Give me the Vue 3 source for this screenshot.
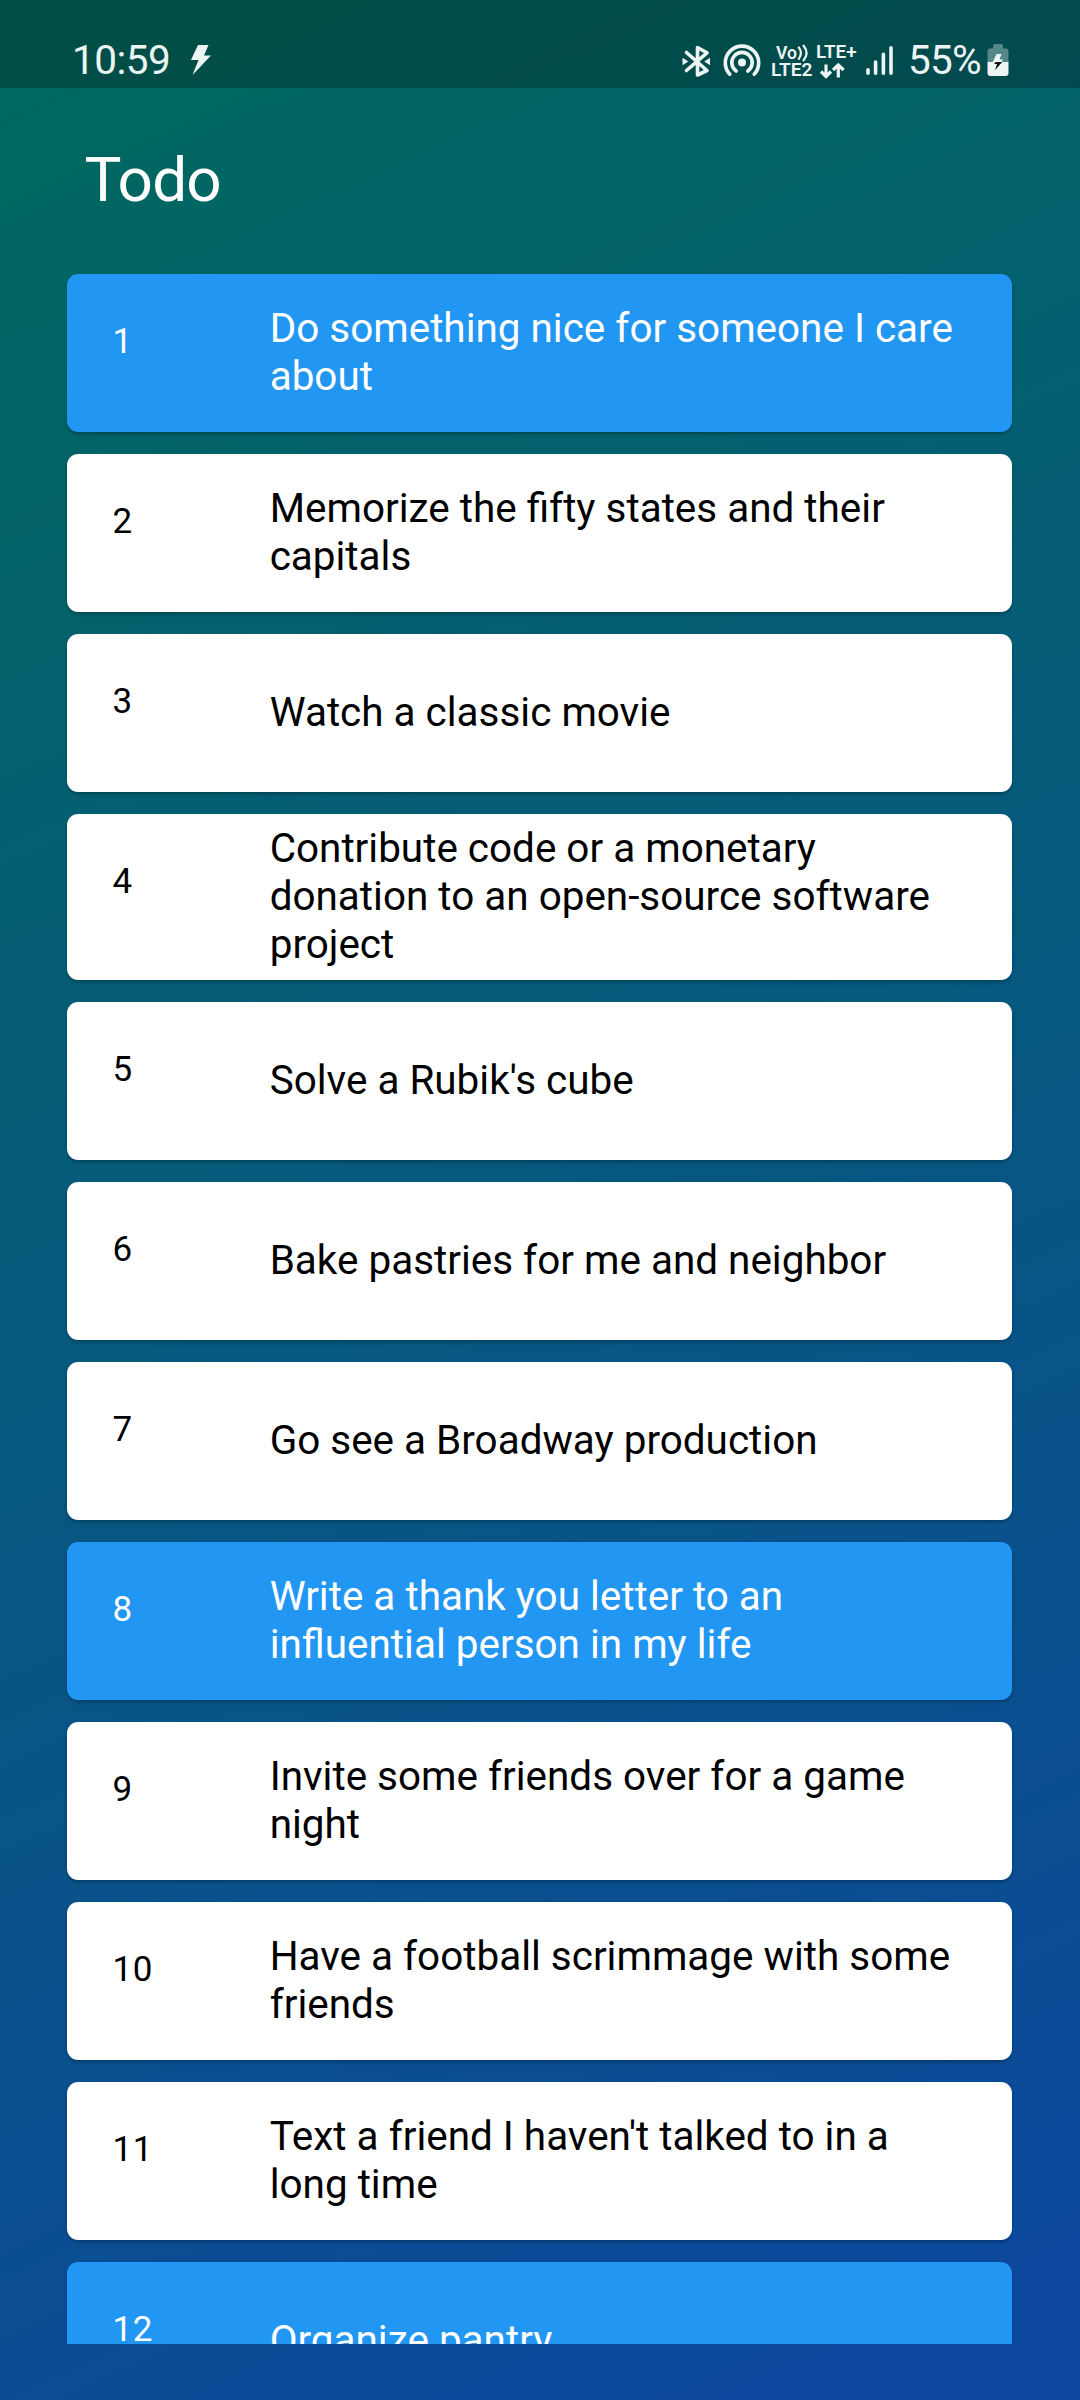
<script setup>
const todos = [
  { text: 'Do something nice for someone I care about', done: true },
  { text: 'Memorize the fifty states and their capitals' },
  { text: 'Watch a classic movie' },
  { text: 'Contribute code or a monetary donation to an open-source software project' },
  { text: "Solve a Rubik's cube" },
  { text: 'Bake pastries for me and neighbor' },
  { text: 'Go see a Broadway production' },
  { text: 'Write a thank you letter to an influential person in my life', done: true },
  { text: 'Invite some friends over for a game night' },
  { text: 'Have a football scrimmage with some friends' },
  { text: "Text a friend I haven't talked to in a long time" },
  { text: 'Organize pantry', done: true },
]
</script>

<template>
  <div class="screen">
    <header class="status">
      <span class="clock">10:59</span>
      <svg class="flash" width="20" height="30" viewBox="0 0 20 30">
        <path d="M7 0H17.500L13 10.500H20L1.500 30L7.500 15H0Z" />
      </svg>
      <span class="spacer"></span>
      <svg class="icons" width="240" height="40" viewBox="680 40 240 40">
        <g class="line">
          <path d="M686.500 52.500L707 70.500L697.500 75V47.500L707 52.800L686.500 70.500" stroke-width="3.600" />
        </g>
        <path d="M682.500 57.800L688.300 61.400L682.500 65.200Z M710 57.800L704.200 61.400L710 65.200Z" />
        <circle cx="742" cy="62.500" r="4" />
        <g class="line" stroke-width="3.6">
          <path d="M736.200 71A10.200 10.200 0 1 1 747.800 71" />
          <path d="M729.800 74.200A16.700 16.700 0 1 1 754.200 74.200" />
        </g>
        <text x="776" y="58.800" class="net" textLength="21" lengthAdjust="spacingAndGlyphs">Vo</text>
        <g class="line" stroke-width="2.2">
          <path d="M798.800 47.300Q803 53 798.800 58.800M803.600 45.700Q809.600 53 803.600 60.300" />
        </g>
        <text x="771" y="76" class="net" textLength="41.500" lengthAdjust="spacingAndGlyphs">LTE2</text>
        <text x="816" y="57.600" class="net" textLength="40.500" lengthAdjust="spacingAndGlyphs">LTE+</text>
        <g class="line flat" stroke-width="3.2">
          <path d="M826 64.500V76M821 71.500L826 76.500L831 71.500M838.300 77.500V66M833 70L838.300 65L843.600 70" />
        </g>
        <g class="line" stroke-width="3.6">
          <path d="M868 69.800V73.200M875.600 62V73.200M883.400 54.300V73.200M891 47.800V73.200" />
        </g>
      </svg>
      <span class="percent">55%</span>
      <svg class="battery" width="22" height="33" viewBox="0 0 22 33">
        <path d="M6 4.500V2Q6 0 8 0H14Q16 0 16 2V4.500H19Q21.500 4.500 21.500 7.500V18H.5V7.500Q.5 4.500 3 4.500Z" opacity=".36" />
        <path d="M.5 18H21.500V29Q21.500 32 18.500 32H3.500Q.5 32 .5 29Z" />
        <path d="M9.500 10H14.500L12.500 15.500H16L14.800 18H5.800Z" />
        <path class="dark" d="M8.800 18H15.200L8 26.300L10 20H7Z" />
      </svg>
    </header>
    <h1 class="title">Todo</h1>
    <main class="list">
      <article v-for="(todo, i) in todos" :key="i" class="card" :class="{ done: todo.done }">
        <span class="number">{{ i + 1 }}</span>
        <p class="text">{{ todo.text }}</p>
      </article>
    </main>
  </div>
</template>

<style>
body {
  margin: 0;
}
</style>

<style scoped>
.screen {
  display: flex;
  flex-direction: column;
  width: 1080px;
  height: 2400px;
  overflow: hidden;
  box-sizing: border-box;
  padding-bottom: 56px;
  background: linear-gradient(155.77deg, #00695c, #0d47a1);
  font-family: Roboto, sans-serif;
  color: #fff;
}
.status {
  display: flex;
  flex: none;
  align-items: flex-start;
  box-sizing: border-box;
  height: 88px;
  padding: 0 71px 0 72px;
  background: rgba(0, 0, 0, 0.25);
  color: #ecf5f3;
  fill: #ecf5f3;
}
.clock,
.percent {
  margin-top: 37px;
  font-size: 40.5px;
  line-height: 47px;
}
.clock {
  width: 119px;
  letter-spacing: -0.5px;
}
.flash {
  margin-top: 45px;
}
.spacer {
  flex: 1;
}
.icons {
  margin: 40px -12px 0 0;
}
.percent {
  width: 79px;
  letter-spacing: -0.8px;
}
.battery {
  margin-top: 44px;
}
.line {
  fill: none;
  stroke: #ecf5f3;
  stroke-linecap: round;
  stroke-linejoin: round;
}
.flat {
  stroke-linecap: butt;
  stroke-linejoin: miter;
}
.net {
  font-size: 18.8px;
  font-weight: 600;
}
.dark {
  fill: #111;
}
.title {
  flex: none;
  margin: 0;
  padding: 55px 0 0 84.4px;
  height: 130.2px;
  font-size: 62px;
  font-weight: 400;
  line-height: 73px;
  letter-spacing: -0.8px;
  box-sizing: border-box;
}
.list {
  display: flex;
  flex: 1;
  flex-direction: column;
  gap: 22.5px;
  min-height: 0;
  overflow: hidden;
  padding: 56px 67.7px 0 67.3px;
}
.card {
  display: flex;
  flex: none;
  align-items: center;
  box-sizing: border-box;
  min-height: 157.5px;
  padding: 11.2px 50px 11.2px 45.2px;
  border-radius: 11.25px;
  background: #fff;
  color: #000;
  box-shadow: 0 3px 4px -1px rgba(0, 0, 0, 0.2), 0 1px 3px rgba(0, 0, 0, 0.14);
}
.done {
  background: #2196f3;
  color: #fff;
}
.number {
  align-self: flex-start;
  flex: none;
  width: 157.2px;
  margin-top: 35.3px;
  font-size: 35px;
  line-height: 41px;
  letter-spacing: 0.7px;
}
.text {
  flex: 1;
  margin: 0;
  font-size: 40.45px;
  line-height: 47.8px;
}
</style>
